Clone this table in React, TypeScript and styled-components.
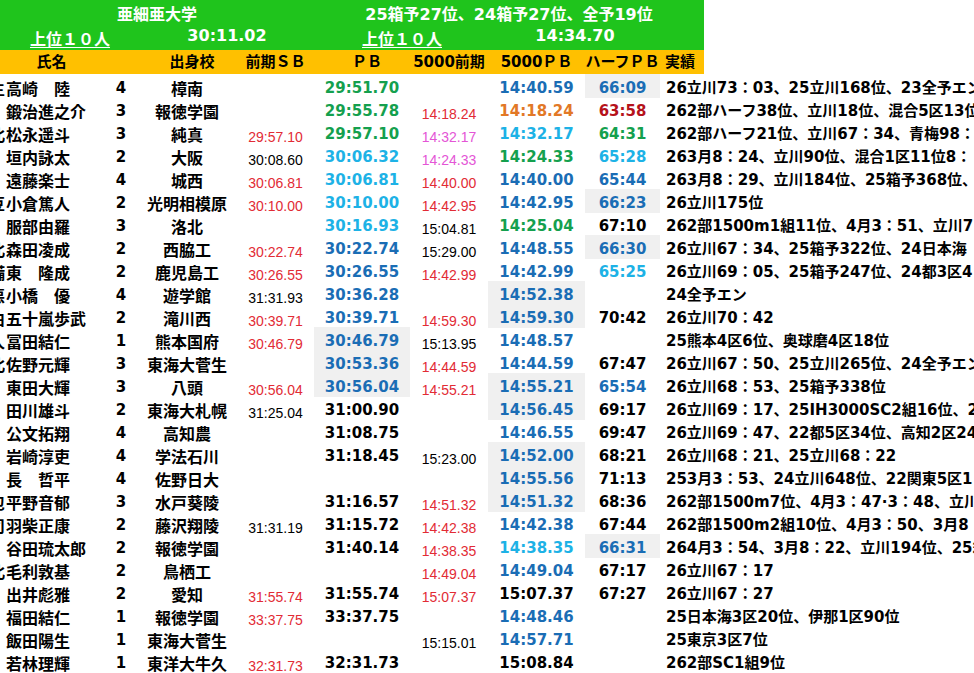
import React from 'react'
import styled, { createGlobalStyle } from 'styled-components'

const cjk = '"Noto Sans CJK JP", sans-serif'
const latin = '"DejaVu Sans", "Noto Sans CJK JP", sans-serif'
const thin = '"Liberation Sans", Arial, sans-serif'

const COLS = '5px 90px 52px 90px 77px 96px 78px 97px 75px'

const tones: Record<string, string> = {
  k: '#000000',
  r: '#e22b35',
  m: '#e455d6',
  g: '#14a04e',
  c: '#1db2e6',
  b: '#1a6db5',
  o: '#e27826',
  d: '#b5121b',
}

type Val = [string, string, boolean?]

type Runner = {
  stub?: string
  name: string
  grade: string
  school: string
  sb?: Val
  pb?: Val
  f5?: Val
  p5?: Val
  half?: Val
  note: string
}

const runners: Runner[] = [
  { stub: '主', name: '高崎　陸', grade: '4', school: '樟南', pb: ['29:51.70', 'g'], p5: ['14:40.59', 'b'], half: ['66:09', 'b', true], note: '26立川73：03、25立川168位、23全予エン' },
  { name: '鍛治進之介', grade: '3', school: '報徳学園', pb: ['29:55.78', 'g'], f5: ['14:18.24', 'r'], p5: ['14:18.24', 'o'], half: ['63:58', 'd'], note: '262部ハーフ38位、立川18位、混合5区13位' },
  { stub: '北', name: '松永遥斗', grade: '3', school: '純真', sb: ['29:57.10', 'r'], pb: ['29:57.10', 'g'], f5: ['14:32.17', 'm'], p5: ['14:32.17', 'c'], half: ['64:31', 'g'], note: '262部ハーフ21位、立川67：34、青梅98：' },
  { name: '垣内詠太', grade: '2', school: '大阪', sb: ['30:08.60', 'k'], pb: ['30:06.32', 'c'], f5: ['14:24.33', 'm'], p5: ['14:24.33', 'g'], half: ['65:28', 'c'], note: '263月8：24、立川90位、混合1区11位8：' },
  { name: '遠藤楽士', grade: '4', school: '城西', sb: ['30:06.81', 'r'], pb: ['30:06.81', 'c'], f5: ['14:40.00', 'r'], p5: ['14:40.00', 'b'], half: ['65:44', 'b'], note: '263月8：29、立川184位、25箱予368位、' },
  { stub: '豆', name: '小倉篤人', grade: '2', school: '光明相模原', sb: ['30:10.00', 'r'], pb: ['30:10.00', 'c'], f5: ['14:42.95', 'r'], p5: ['14:42.95', 'b'], half: ['66:23', 'b', true], note: '26立川175位' },
  { name: '服部由羅', grade: '3', school: '洛北', pb: ['30:16.93', 'c'], f5: ['15:04.81', 'k'], p5: ['14:25.04', 'g'], half: ['67:10', 'k'], note: '262部1500m1組11位、4月3：51、立川7' },
  { stub: '北', name: '森田凌成', grade: '2', school: '西脇工', sb: ['30:22.74', 'r'], pb: ['30:22.74', 'b'], f5: ['15:29.00', 'k'], p5: ['14:48.55', 'b'], half: ['66:30', 'b', true], note: '26立川67：34、25箱予322位、24日本海' },
  { stub: '備', name: '東　隆成', grade: '2', school: '鹿児島工', sb: ['30:26.55', 'r'], pb: ['30:26.55', 'b'], f5: ['14:42.99', 'r'], p5: ['14:42.99', 'b'], half: ['65:25', 'c'], note: '26立川69：05、25箱予247位、24都3区4' },
  { stub: '悪', name: '小橋　優', grade: '4', school: '遊学館', sb: ['31:31.93', 'k'], pb: ['30:36.28', 'b'], p5: ['14:52.38', 'b', true], note: '24全予エン' },
  { stub: '由', name: '五十嵐歩武', grade: '2', school: '滝川西', sb: ['30:39.71', 'r'], pb: ['30:39.71', 'b'], f5: ['14:59.30', 'r'], p5: ['14:59.30', 'b', true], half: ['70:42', 'k'], note: '26立川70：42' },
  { stub: '人', name: '冨田結仁', grade: '1', school: '熊本国府', sb: ['30:46.79', 'r'], pb: ['30:46.79', 'b', true], f5: ['15:13.95', 'k'], p5: ['14:48.57', 'b'], note: '25熊本4区6位、奥球磨4区18位' },
  { stub: '北', name: '佐野元輝', grade: '3', school: '東海大菅生', pb: ['30:53.36', 'b', true], f5: ['14:44.59', 'r'], p5: ['14:44.59', 'b'], half: ['67:47', 'k'], note: '26立川67：50、25立川265位、24全予エン' },
  { name: '東田大輝', grade: '3', school: '八頭', sb: ['30:56.04', 'r'], pb: ['30:56.04', 'b', true], f5: ['14:55.21', 'r'], p5: ['14:55.21', 'b', true], half: ['65:54', 'b'], note: '26立川68：53、25箱予338位' },
  { name: '田川雄斗', grade: '2', school: '東海大札幌', sb: ['31:25.04', 'k'], pb: ['31:00.90', 'k'], p5: ['14:56.45', 'b', true], half: ['69:17', 'k'], note: '26立川69：17、25IH3000SC2組16位、2' },
  { name: '公文拓翔', grade: '4', school: '高知農', pb: ['31:08.75', 'k'], p5: ['14:46.55', 'b'], half: ['69:47', 'k'], note: '26立川69：47、22都5区34位、高知2区24' },
  { name: '岩崎淳吏', grade: '4', school: '学法石川', pb: ['31:18.45', 'k'], f5: ['15:23.00', 'k'], p5: ['14:52.00', 'b', true], half: ['68:21', 'k'], note: '26立川68：21、25立川68：22' },
  { name: '長　哲平', grade: '4', school: '佐野日大', p5: ['14:55.56', 'b', true], half: ['71:13', 'k'], note: '253月3：53、24立川648位、22関東5区1' },
  { stub: '包', name: '平野音郁', grade: '3', school: '水戸葵陵', pb: ['31:16.57', 'k'], f5: ['14:51.32', 'r'], p5: ['14:51.32', 'b', true], half: ['68:36', 'k'], note: '262部1500m7位、4月3：47·3：48、立川' },
  { stub: '司', name: '羽柴正康', grade: '2', school: '藤沢翔陵', sb: ['31:31.19', 'k'], pb: ['31:15.72', 'k'], f5: ['14:42.38', 'r'], p5: ['14:42.38', 'b'], half: ['67:44', 'k'], note: '262部1500m2組10位、4月3：50、3月8' },
  { name: '谷田琉太郎', grade: '2', school: '報徳学園', pb: ['31:40.14', 'k'], f5: ['14:38.35', 'r'], p5: ['14:38.35', 'c'], half: ['66:31', 'b', true], note: '264月3：54、3月8：22、立川194位、25箱' },
  { stub: '北', name: '毛利敦基', grade: '2', school: '鳥栖工', f5: ['14:49.04', 'r'], p5: ['14:49.04', 'b'], half: ['67:17', 'k'], note: '26立川67：17' },
  { name: '出井彪雅', grade: '2', school: '愛知', sb: ['31:55.74', 'r'], pb: ['31:55.74', 'k'], f5: ['15:07.37', 'r'], p5: ['15:07.37', 'k'], half: ['67:27', 'k'], note: '26立川67：27' },
  { name: '福田結仁', grade: '1', school: '報徳学園', sb: ['33:37.75', 'r'], pb: ['33:37.75', 'k'], p5: ['14:48.46', 'b'], note: '25日本海3区20位、伊那1区90位' },
  { name: '飯田陽生', grade: '1', school: '東海大菅生', f5: ['15:15.01', 'k'], p5: ['14:57.71', 'b'], note: '25東京3区7位' },
  { name: '若林理輝', grade: '1', school: '東洋大牛久', sb: ['32:31.73', 'r'], pb: ['32:31.73', 'k'], p5: ['15:08.84', 'k'], note: '262部SC1組9位' },
]

const GlobalStyle = createGlobalStyle`
  * {
    box-sizing: border-box;
  }

  body {
    margin: 0;
    background: #ffffff;
    font-family: ${latin};
  }
`

const Page = styled.div`
  width: 974px;
  height: 673px;
  overflow: hidden;
  background: #ffffff;
  color: #000000;
`

const TeamHeader = styled.div`
  display: grid;
  width: 704px;
  grid-template-columns: 140px 174px 176px 170px 44px;
  grid-template-rows: 25px 25px;
  background: #1fc41c;
  color: #ffffff;
  font: 700 16px/20px ${latin};
`

const HeadText = styled.div<{ $span: string; $top: number; $under?: boolean }>`
  grid-column: ${props => props.$span};
  padding-top: ${props => props.$top}px;
  text-align: center;
  white-space: nowrap;
  text-decoration: ${props => (props.$under ? 'underline' : 'none')};
  text-underline-offset: 2px;
`

const Legend = styled.div`
  display: grid;
  width: 704px;
  height: 24px;
  grid-template-columns: ${COLS} 44px;
  background: #ffc000;
  font: 700 15px/24px ${latin};
`

const LegendCell = styled.div<{ $shift?: number; $left?: boolean }>`
  text-align: ${props => (props.$left ? 'left' : 'center')};
  padding-left: ${props => props.$shift || 0}px;
  white-space: nowrap;
`

const Row = styled.div`
  display: grid;
  height: 23px;
  grid-template-columns: ${COLS} minmax(0, 1fr);
`

const Stub = styled.div`
  display: flex;
  justify-content: flex-end;
  overflow: hidden;
  padding-top: 4px;
  font: 700 16px/20px ${cjk};
  white-space: nowrap;
`

const Name = styled.div`
  padding: 4px 0 0 1px;
  font: 700 16px/20px ${cjk};
  white-space: nowrap;
`

const School = styled(Name)`
  padding: 4px 10px 0 0;
  text-align: center;
`

const Grade = styled.div`
  padding-top: 4px;
  text-align: center;
  font: 700 15px/20px ${latin};
`

const Split = styled.div<{ $tone: string; $rule?: boolean }>`
  padding-top: 10px;
  text-align: center;
  font: 400 14px/14px ${thin};
  color: ${props => props.$tone};
  white-space: nowrap;
  overflow: ${props => (props.$rule ? 'hidden' : 'visible')};
  border-bottom: ${props => (props.$rule ? '2px solid #000' : 'none')};
`

const Best = styled.div<{ $tone: string; $shade?: boolean; $rule?: boolean }>`
  padding-top: 4px;
  text-align: center;
  font: 700 15px/20px ${latin};
  color: ${props => props.$tone};
  background: ${props => (props.$shade ? '#f0f0f0' : 'transparent')};
  white-space: nowrap;
  border-bottom: ${props => (props.$rule ? '2px solid #000' : 'none')};
`

const Note = styled.div`
  padding: 4px 0 0 6px;
  font: 700 15px/20px ${latin};
  white-space: nowrap;
  overflow: hidden;
`

function RunnerRow({ r, last }: { r: Runner; last: boolean }) {
  const split = (v?: Val, rule?: boolean) => (
    <Split $tone={v ? tones[v[1]] : '#000'} $rule={rule}>
      {v ? v[0] : ''}
    </Split>
  )
  const best = (v?: Val, rule?: boolean) => (
    <Best $tone={v ? tones[v[1]] : '#000'} $shade={v ? v[2] : false} $rule={rule}>
      {v ? v[0] : ''}
    </Best>
  )
  return (
    <Row>
      <Stub>{r.stub || ''}</Stub>
      <Name>{r.name}</Name>
      <Grade>{r.grade}</Grade>
      <School>{r.school}</School>
      {split(r.sb, last)}
      {best(r.pb, last)}
      {split(r.f5)}
      {best(r.p5)}
      {best(r.half)}
      <Note>{r.note}</Note>
    </Row>
  )
}

export default function App() {
  return (
    <Page>
      <GlobalStyle />
      <TeamHeader>
        <HeadText $span="1 / 3" $top={5}>亜細亜大学</HeadText>
        <HeadText $span="3 / 6" $top={5}>25箱予27位、24箱予27位、全予19位</HeadText>
        <HeadText $span="1 / 2" $top={5} $under>上位１０人</HeadText>
        <HeadText $span="2 / 3" $top={1}>30:11.02</HeadText>
        <HeadText $span="3 / 4" $top={5} $under>上位１０人</HeadText>
        <HeadText $span="4 / 5" $top={1}>14:34.70</HeadText>
      </TeamHeader>
      <Legend>
        <LegendCell />
        <LegendCell $shift={3}>氏名</LegendCell>
        <LegendCell />
        <LegendCell>出身校</LegendCell>
        <LegendCell>前期ＳＢ</LegendCell>
        <LegendCell $shift={10}>ＰＢ</LegendCell>
        <LegendCell>5000前期</LegendCell>
        <LegendCell>5000ＰＢ</LegendCell>
        <LegendCell>ハーフＰＢ</LegendCell>
        <LegendCell $left $shift={5}>実績</LegendCell>
      </Legend>
      {runners.map((r, i) => (
        <RunnerRow key={r.name + i} r={r} last={i === runners.length - 1} />
      ))}
    </Page>
  )
}
